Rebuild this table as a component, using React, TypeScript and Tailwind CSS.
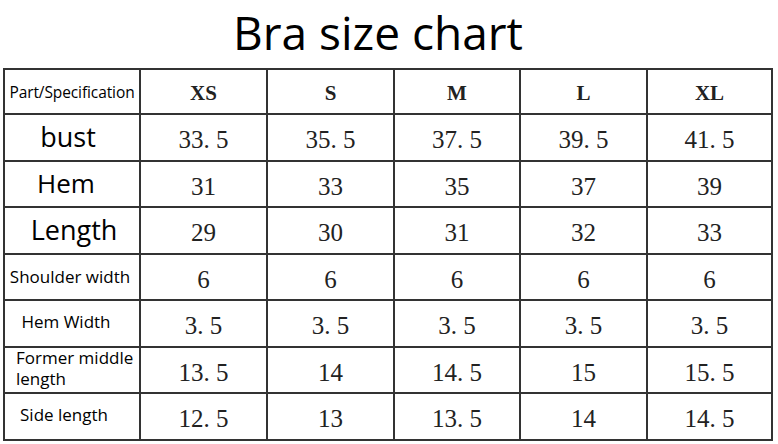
const sizes = ["XS", "S", "M", "L", "XL"];

type Row = { label: string; cls: string; values: string[] };

const rows: Row[] = [
  { label: "bust", cls: "text-[27px] pr-2", values: ["33. 5", "35. 5", "37. 5", "39. 5", "41. 5"] },
  { label: "Hem", cls: "text-[26px] pr-3", values: ["31", "33", "35", "37", "39"] },
  { label: "Length", cls: "text-[27px] pl-1", values: ["29", "30", "31", "32", "33"] },
  { label: "Shoulder width", cls: "text-[17px] pr-1", values: ["6", "6", "6", "6", "6"] },
  { label: "Hem Width", cls: "text-[17px] -mt-1 pr-3", values: ["3. 5", "3. 5", "3. 5", "3. 5", "3. 5"] },
  { label: "Former middle length", cls: "text-[17px] leading-[21px] text-left pl-[11px] -mt-1", values: ["13. 5", "14", "14. 5", "15", "15. 5"] },
  { label: "Side length", cls: "text-[17px] -mt-1 pr-4", values: ["12. 5", "13", "13. 5", "14", "14. 5"] },
];

export default function App() {
  return (
    <div className="w-[778px] h-[444px] bg-white overflow-hidden">
      <h1 className="text-center text-[46px] leading-[52px] pt-[6px] pr-[22px] h-[68px] text-black font-['Open_Sans','Noto_Sans',sans-serif]">
        Bra size chart
      </h1>
      <table className="ml-[3px] w-[768px] table-fixed border-collapse border-2 border-[#333] text-[#222]">
        <colgroup>
          <col className="w-[136px]" />
          <col className="w-[127px]" />
          <col className="w-[127px]" />
          <col className="w-[126px]" />
          <col className="w-[127px]" />
          <col className="w-[125px]" />
        </colgroup>
        <tbody>
          <tr className="h-[45px]">
            <td className="border-2 border-[#333] pt-[3px] text-center text-[15.5px] tracking-[-0.1px] font-['Open_Sans','Noto_Sans',sans-serif] text-black">
              Part/Specification
            </td>
            {sizes.map((s) => (
              <td
                key={s}
                className="border-2 border-[#333] pt-[5px] text-center text-[21px] font-bold font-['Liberation_Serif',serif]"
              >
                {s}
              </td>
            ))}
          </tr>
          {rows.map((r) => (
            <tr key={r.label} className="h-[46.5px]">
              <td className="border-2 border-[#333] text-center font-['Open_Sans','Noto_Sans',sans-serif] text-black">
                <div className={r.cls}>{r.label}</div>
              </td>
              {r.values.map((v, i) => (
                <td
                  key={i}
                  className="border-2 border-[#333] pt-[5px] text-center text-[25px] font-['Liberation_Serif',serif] whitespace-pre"
                >
                  {v}
                </td>
              ))}
            </tr>
          ))}
        </tbody>
      </table>
    </div>
  );
}
